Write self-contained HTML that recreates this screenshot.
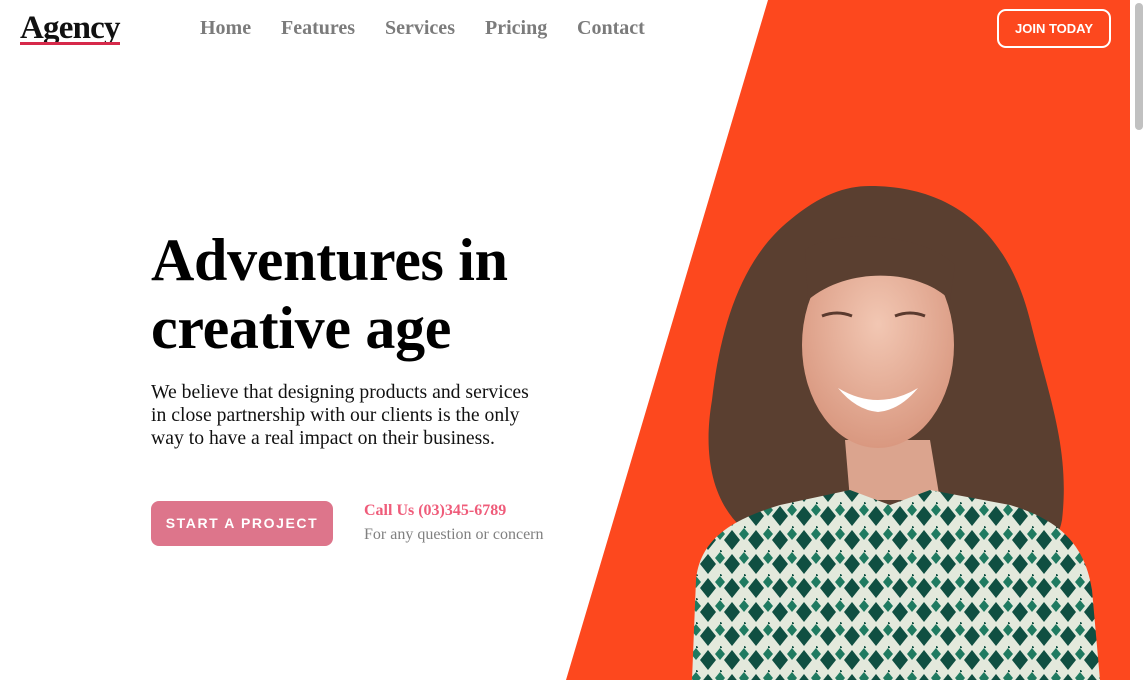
<!DOCTYPE html>
<html><head><meta charset="utf-8"><style>
*{margin:0;padding:0;box-sizing:border-box}
body{width:1144px;height:680px;overflow:hidden;background:#fff;font-family:"Liberation Serif",serif;position:relative}
.logo{position:absolute;left:20px;top:10px;font-size:33px;font-weight:bold;color:#111;letter-spacing:-0.8px}
.logo span{position:absolute;left:0;right:0;top:32px;height:3px;background:#d6294a}
.nav{position:absolute;top:17px;font-size:20px;font-weight:bold;color:#7b7b7b}
h1{position:absolute;left:151px;top:226px;font-size:60px;line-height:68px;font-weight:bold;color:#000;letter-spacing:-0.3px}
p.lead{position:absolute;left:151px;top:381px;font-size:19.7px;line-height:23px;color:#111;width:420px}
.btn{position:absolute;left:151px;top:501px;width:182px;height:45px;border-radius:8px;background:#dd758b;color:#fff;font-family:"Liberation Sans",sans-serif;font-weight:bold;font-size:14px;letter-spacing:1.6px;text-align:center;line-height:45px}
.call{position:absolute;left:364px;top:502px;font-size:16px;font-weight:bold;color:#ef5c7a}
.q{position:absolute;left:364px;top:526px;font-size:16px;color:#808080}
.join{position:absolute;left:997px;top:9px;width:114px;height:39px;border:2px solid #fff;border-radius:9px;color:#fff;font-family:"Liberation Sans",sans-serif;font-weight:bold;font-size:13px;text-align:center;line-height:35px}
.sb{position:absolute;left:1130px;top:0;width:14px;height:680px;background:#fff}
.sb div{position:absolute;left:5px;top:3px;width:8px;height:127px;border-radius:4px;background:#c1c1c1}
</style></head><body>
<svg width="1144" height="680" style="position:absolute;left:0;top:0">
<defs>
<pattern id="sh" width="24" height="24" patternUnits="userSpaceOnUse">
<rect width="24" height="24" fill="#e3e9dc"/>
<path d="M12 2 L20 12 L12 22 L4 12Z" fill="#104f42"/>
<path d="M0 0 L5 6 L0 12Z M24 0 L19 6 L24 12Z" fill="#1f7a60"/>
<circle cx="0" cy="24" r="2" fill="#104f42"/>
</pattern>
<radialGradient id="sk" cx="50%" cy="40%" r="60%"><stop offset="0" stop-color="#f2c7b3"/><stop offset="1" stop-color="#d99880"/></radialGradient>
</defs>
<polygon points="768,0 1130,0 1130,680 566,680" fill="#fd481e"/>
<path d="M870 186 C960 186 1010 240 1030 320 C1050 400 1070 450 1062 520 C1055 560 1010 570 980 560 L760 540 C720 520 700 470 712 400 C720 330 740 260 790 220 C820 195 845 186 870 186Z" fill="#5a3f30"/>
<path d="M880 440 L930 440 L940 500 L850 500 L845 440Z" fill="#dba48e"/>
<path d="M692 680 L696 580 C700 540 730 520 780 505 L850 490 L890 505 L930 490 L1010 505 C1060 520 1085 545 1092 590 L1100 680Z" fill="url(#sh)"/>
<ellipse cx="878" cy="345" rx="76" ry="103" fill="url(#sk)"/>
<path d="M805 250 C830 230 920 230 955 265 L950 300 C920 270 850 265 808 300Z" fill="#5a3f30"/>
<path d="M838 388 Q878 412 918 388 Q900 410 878 412 Q856 410 838 388Z" fill="#fff"/>
<path d="M822 316 q15 -6 30 0 M895 316 q15 -6 30 0" stroke="#5a3a2e" stroke-width="3" fill="none"/>
</svg>
<div class="logo">Agency<span></span></div>
<div class="nav" style="left:200px">Home</div>
<div class="nav" style="left:281px">Features</div>
<div class="nav" style="left:385px">Services</div>
<div class="nav" style="left:485px">Pricing</div>
<div class="nav" style="left:577px">Contact</div>
<div class="join">JOIN TODAY</div>
<h1>Adventures in<br>creative age</h1>
<p class="lead">We believe that designing products and services<br>in close partnership with our clients is the only<br>way to have a real impact on their business.</p>
<div class="btn">START A PROJECT</div>
<div class="call">Call Us (03)345-6789</div>
<div class="q">For any question or concern</div>
<div class="sb"><div></div></div>
</body></html>
